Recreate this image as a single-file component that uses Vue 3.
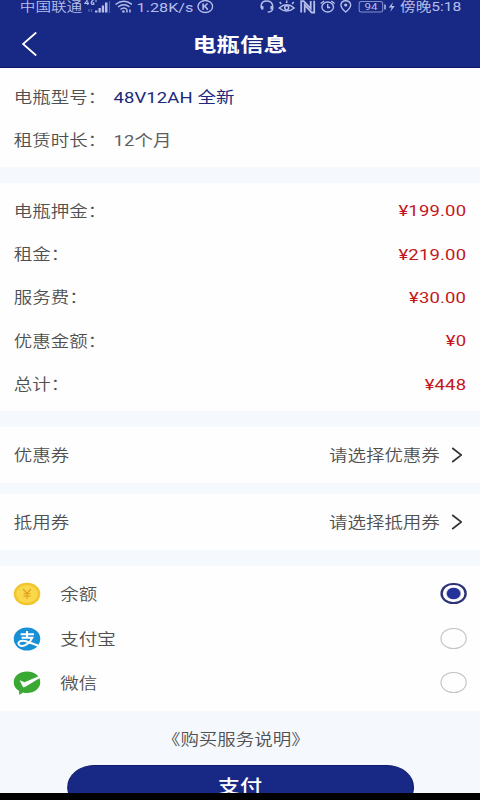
<script setup>
import { ref } from 'vue'

const info = [
  { label: '电瓶型号：', value: '48V12AH 全新', accent: true },
  { label: '租赁时长：', value: '12个月', accent: false }
]
const fees = [
  { label: '电瓶押金：', value: '¥199.00' },
  { label: '租金：', value: '¥219.00' },
  { label: '服务费：', value: '¥30.00' },
  { label: '优惠金额：', value: '¥0' },
  { label: '总计：', value: '¥448' }
]
const coupons = [
  { label: '优惠券', hint: '请选择优惠券' },
  { label: '抵用券', hint: '请选择抵用券' }
]
const methods = [
  { id: 'balance', label: '余额' },
  { id: 'alipay', label: '支付宝' },
  { id: 'wechat', label: '微信' }
]
const selected = ref('balance')
</script>

<template>
  <div class="screen">
    <header class="header">
      <div class="status">
        <span class="carrier">中国联通</span>
        <svg class="net" viewBox="84 0 49 14" preserveAspectRatio="none">
          <g fill="none" stroke="#b5bee8" stroke-width="1.2">
            <path d="M87.500 0 L85 3.500 H89 M87.800 1.500 V5 M93.500 .8 C91 -.3 90.500 4.500 92.500 4.500 H93.700 V2.800 H92.500 M95 1 H97" />
            <path d="M89 9 V12 M91.500 9 V12" opacity=".4" />
          </g>
          <g fill="#b5bee8">
            <rect x="95" y="10.500" width="2.500" height="2" />
            <rect x="98.500" y="8" width="2.300" height="4.500" />
            <rect x="101.800" y="5.500" width="2.300" height="7" />
            <rect x="105" y="2.500" width="2.500" height="10" />
          </g>
          <path d="M109.500 1 V13" stroke="#5360a8" />
          <g fill="none" stroke="#b5bee8" stroke-width="1.500">
            <path d="M115.500 4.500 Q124 -2 132 4.500" />
            <path d="M118 7 Q124 2.500 129.500 7" />
            <path d="M120.500 9.500 Q124 6.500 127 9.500" />
          </g>
          <circle cx="123.500" cy="11.500" r="1.300" fill="#b5bee8" />
          <path d="M127 9.500 v3 M130 9.500 v3" stroke="#b5bee8" stroke-width="1.500" fill="none" />
        </svg>
        <span class="speed">1.28K/s</span>
        <svg class="kicon" viewBox="0 0 17 14" preserveAspectRatio="none">
          <g fill="none" stroke="#b5bee8" stroke-width="1.400">
            <ellipse cx="8.500" cy="6.500" rx="7.300" ry="6" />
            <path d="M6.300 3.500 V9.700 M10.800 3.500 L6.800 7 M8 6 L11 9.700" stroke-width="1.600" />
          </g>
        </svg>
        <span class="grow"></span>
        <svg class="tray" viewBox="259 0 138 14" preserveAspectRatio="none">
          <g fill="none" stroke="#b5bee8" stroke-width="1.500">
            <path d="M261 8 V6 Q261 1 266.500 1 T272.500 6 V9 Q272 12 267.500 12" />
            <path d="M262 6 V9.500 M271.500 6 V9.500" stroke-width="2.500" />
            <path d="M279 8 Q286.500 1.500 294 8 Q286.500 14 279 8 Z" />
            <circle cx="286.500" cy="7.700" r="2" />
            <path d="M281 4 L279.500 2 M286.500 3 V.5 M292 4 L293.500 2" />
          </g>
          <path d="M301 12.500 V1.200 H303.500 L310.500 8.500 V1" fill="none" stroke="#b5bee8" stroke-width="1.800" />
          <path d="M304.500 12.500 V4.800 L311.500 12.500 H314 V.8" fill="none" stroke="#b5bee8" stroke-width="1.800" />
          <g fill="none" stroke="#b5bee8" stroke-width="1.400">
            <ellipse cx="327.500" cy="7" rx="5.800" ry="5" />
            <path d="M320.500 3.500 L324 1 M334.500 3.500 L331 1 M327.500 4 V7.500 H330" />
            <path d="M345.500 12 Q340.700 8 340.700 5 Q341 .8 345.500 .8 T350.500 5 Q350.300 8 345.500 12 Z" />
          </g>
          <circle cx="345.500" cy="5" r="1.600" fill="#b5bee8" />
          <rect x="359" y="1.500" width="23.500" height="10.500" rx="2" fill="none" stroke="#8390cc" />
          <text class="battery" x="370.700" y="10.200" text-anchor="middle" textLength="13" lengthAdjust="spacingAndGlyphs">94</text>
          <path d="M384.800 4.500 V9.500" stroke="#b5bee8" stroke-width="1.500" />
          <path d="M393 2 L388.500 7.500 H391.500 L390 12 L394.500 6 H391.500 Z" fill="#b5bee8" />
        </svg>
        <span class="time">傍晚5:18</span>
      </div>
      <div class="nav">
        <svg class="back" viewBox="0 0 16 26" preserveAspectRatio="none">
          <path d="M15 1.500 L1.500 13 L15 24.500" fill="none" stroke="#fff" stroke-width="1.800" />
        </svg>
        <h1 class="title">电瓶信息</h1>
      </div>
    </header>

    <section class="card info">
      <div v-for="row in info" :key="row.label" class="row">
        <span class="label">{{ row.label }}</span>
        <span class="value" :class="{ accent: row.accent }">{{ row.value }}</span>
      </div>
    </section>

    <section class="card fees">
      <div v-for="row in fees" :key="row.label" class="row between">
        <span class="label">{{ row.label }}</span>
        <span class="price">{{ row.value }}</span>
      </div>
    </section>

    <section class="coupons">
      <div v-for="c in coupons" :key="c.label" class="card coupon">
        <span>{{ c.label }}</span>
        <span class="hint">{{ c.hint }}</span>
        <svg class="chevron" viewBox="0 0 11 16" preserveAspectRatio="none">
          <path d="M1 1 L9.800 8 L1 15" fill="none" stroke="#333" stroke-width="1.600" />
        </svg>
      </div>
    </section>

    <section class="card methods">
      <div v-for="m in methods" :key="m.id" class="method" @click="selected = m.id">
        <svg class="logo" viewBox="0 0 28 24" preserveAspectRatio="none">
          <template v-if="m.id === 'balance'">
            <ellipse cx="14" cy="12" rx="13.500" ry="11.200" fill="#f0c62c" />
            <ellipse cx="14" cy="12" rx="11" ry="9" fill="#fbd74c" />
            <path d="M10 7 L14 11.500 L18 7 M14 11.500 V17 M10.500 11.700 H17.500 M10.500 14.200 H17.500" fill="none" stroke="#e3a51c" stroke-width="1.300" />
          </template>
          <template v-else-if="m.id === 'alipay'">
            <ellipse cx="14" cy="12" rx="13.500" ry="11.500" fill="#1890d5" />
            <path d="M7.500 7.200 H21 M14 4 V10.500 M8.500 10.700 H19.500 Q17.500 15 14 17.200 Q9.500 20 6.500 18.300 Q4.200 16.500 6.300 14.700 Q9 13 13 14.200 Q18 15.800 26 19" fill="none" stroke="#fff" stroke-width="2" />
          </template>
          <template v-else>
            <path d="M14 .5 C21.500 .5 27.500 5 27.500 11.300 C27.500 17.500 21.500 22 14 22 Q12 22 10 21.500 L6 24 L6 20 C2.500 18 .5 15 .5 11.300 C.5 5 6.500 .5 14 .5 Z" fill="#39a933" />
            <path d="M6.500 9.300 L11.500 11.300 L26.300 5 L27 7 L11.500 16.300 Q10.300 16.600 9.600 15.500 Z" fill="#fff" />
          </template>
        </svg>
        <span class="name">{{ m.label }}</span>
        <span class="radio" :class="{ on: selected === m.id }"></span>
      </div>
    </section>

    <a class="terms">《购买服务说明》</a>
    <div class="action"><button class="pay">支付</button></div>
    <div class="bottom"></div>
  </div>
</template>

<style>
body {
  margin: 0;
  overflow: hidden;
  background: #f5f8fd;
}
</style>

<style scoped>
.screen {
  width: 400px;
  height: 800px;
  transform: scaleX(1.2);
  transform-origin: 0 0;
  display: flex;
  flex-direction: column;
  overflow: hidden;
  background: #f5f8fd;
  color: #505050;
  font: 350 15.4px/20px Roboto, "Noto Sans CJK SC", sans-serif;
}
.header {
  box-sizing: border-box;
  height: 68px;
  flex: none;
  background: #182885;
  border-bottom: 1px solid #0e1766;
}
.status {
  display: flex;
  align-items: center;
  height: 14px;
  padding: 0 15.500px 0 16.500px;
  color: #b5bee8;
  font-size: 13px;
  line-height: 14px;
  white-space: nowrap;
}
.status svg {
  height: 14px;
  flex: none;
}
.net {
  width: 40.800px;
  margin: 0 3.500px 0 1px;
}
.kicon {
  width: 14.200px;
  margin-left: 3px;
}
.tray {
  width: 115px;
  margin-right: 2px;
}
.battery {
  font: 400 9.500px Roboto, sans-serif;
  fill: #b5bee8;
}
.speed {
  font-size: 13.500px;
}
.speed,
.time {
  font-weight: 400;
}
.grow {
  flex: 1;
}
.nav {
  display: grid;
  grid-template-columns: 60px 1fr 60px;
  align-items: center;
  height: 60px;
}
.back {
  width: 13px;
  height: 26px;
  margin-left: 17.500px;
}
.title {
  margin: 3px 0 0;
  color: #fff;
  font-size: 19.700px;
  font-weight: 700;
  line-height: 24px;
  text-align: center;
}
.card {
  background: #fefefe;
  flex: none;
}
.info {
  height: 99px;
  box-sizing: border-box;
  padding-top: 8px;
}
.fees {
  height: 228px;
  box-sizing: border-box;
  padding-top: 7px;
  margin-top: 16px;
}
.row {
  display: flex;
  align-items: center;
  height: 43.400px;
  padding: 0 11.500px;
}
.between {
  justify-content: space-between;
}
.label {
  width: 83px;
}
.value {
  font-weight: 400;
  letter-spacing: 0.1px;
  color: #606060;
}
.accent {
  color: #20297a;
}
.price {
  color: #c4161c;
  font-weight: 400;
  letter-spacing: 0.15px;
  margin-bottom: 1px;
}
.coupons {
  display: flex;
  flex-direction: column;
  gap: 11px;
  margin: 16px 0;
}
.coupon {
  box-sizing: border-box;
  display: flex;
  align-items: center;
  height: 56px;
  padding: 1px 15px 0 11.500px;
}
.hint {
  margin-left: auto;
}
.chevron {
  width: 9.500px;
  height: 16px;
  margin: 0 0 1px 9px;
}
.methods {
  height: 145px;
  box-sizing: border-box;
  padding-top: 6px;
}
.method {
  display: flex;
  align-items: center;
  height: 44.500px;
  padding: 0 11.500px 0 10.800px;
}
.logo {
  width: 23px;
  height: 24px;
}
.name {
  margin: 2px 0 0 16.500px;
}
.radio {
  box-sizing: border-box;
  width: 21.200px;
  height: 21.200px;
  margin: 0 0 1px auto;
  border: 1.600px solid #c4c4c4;
  border-width: 1.600px;
  border-radius: 50%;
}
.radio.on {
  border: 2px solid #2d3378;
  background: radial-gradient(circle, #23339a 0 5.400px, transparent 6.200px);
}
.terms {
  margin: 19px 7px 0 0;
  text-align: center;
}
.action {
  height: 28px;
  margin-top: 15px;
  overflow: hidden;
  display: flex;
  justify-content: center;
}
.pay {
  flex: none;
  width: 289px;
  height: 45px;
  padding: 0;
  border: 1px solid #101b6e;
  border-radius: 23px;
  background: #182885;
  color: #fff;
  font: 500 18.500px/43px Roboto, "Noto Sans CJK SC", sans-serif;
}
.bottom {
  height: 7px;
  background: #000;
}
</style>
